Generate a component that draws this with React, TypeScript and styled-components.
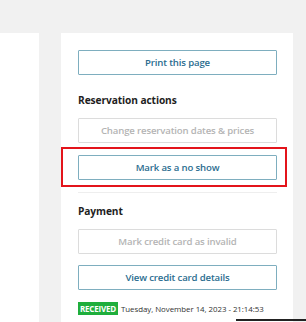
import React from 'react';
import styled, { createGlobalStyle } from 'styled-components';

const GlobalStyle = createGlobalStyle`
  html, body {
    margin: 0;
    padding: 0;
    background: #f1f1f1;
    font-family: "Open Sans", "Noto Sans", Arial, sans-serif;
    overflow: hidden;
  }
`;

const Page = styled.div`
  display: flex;
  gap: 22px;
  padding-top: 33px;
  height: 322px;
  box-sizing: border-box;
  position: relative;
`;

const SidePanel = styled.div`
  width: 39px;
  background: #fff;
`;

const Card = styled.div`
  width: 232px;
  background: #fff;
  padding: 17px 16px 0 17px;
  box-sizing: border-box;
  display: flex;
  flex-direction: column;
`;

const Button = styled.button<{ $disabled?: boolean }>`
  height: 25px;
  width: 100%;
  box-sizing: border-box;
  background: #fff;
  border: 1px solid ${(p) => (p.$disabled ? '#dcdcdc' : '#7eaebf')};
  border-radius: 1px;
  color: ${(p) => (p.$disabled ? '#b4b4b4' : '#2b6d8f')};
  font-family: "Open Sans", "Noto Sans", Arial, sans-serif;
  font-size: 9.6px;
  font-weight: 600;
  letter-spacing: -0.15px;
  padding: 0;
  cursor: ${(p) => (p.$disabled ? 'default' : 'pointer')};
  margin-top: ${(p) => (p.$disabled ? '10px' : '11px')};
`;

const Heading = styled.h3`
  margin: 17px 0 0;
  font-size: 10.2px;
  line-height: 16px;
  font-weight: 700;
  color: #1e1e1e;
  letter-spacing: -0.1px;
`;

const Highlight = styled.div`
  position: relative;
  margin-top: 11px;

  &::after {
    content: '';
    position: absolute;
    left: -17px;
    right: -10px;
    top: -7px;
    bottom: -7px;
    border: 2px solid #e3141b;
  }
`;

const Divider = styled.hr`
  border: none;
  border-top: 1px solid #eeeeee;
  margin: 12px 0 0;
`;

const Status = styled.div`
  display: flex;
  align-items: center;
  gap: 3px;
  margin-top: 12px;
`;

const Badge = styled.span`
  background: #1fae3c;
  color: #fff;
  font-size: 8px;
  font-weight: 700;
  line-height: 13px;
  padding: 0 2px;
  letter-spacing: -0.2px;
`;

const DateText = styled.span`
  font-size: 7.9px;
  color: #333;
  letter-spacing: -0.05px;
`;

const BottomBar = styled.div`
  position: absolute;
  left: 236px;
  right: 0;
  bottom: 1px;
  height: 2px;
  background: #222;
`;

export default function App() {
  return (
    <>
      <GlobalStyle />
      <Page>
        <SidePanel />
        <Card>
          <Button style={{ marginTop: 0 }}>Print this page</Button>
          <Heading>Reservation actions</Heading>
          <Button $disabled>Change reservation dates &amp; prices</Button>
          <Highlight>
            <Button style={{ marginTop: 0 }}>Mark as a no show</Button>
          </Highlight>
          <Divider />
          <Heading style={{ marginTop: 10 }}>Payment</Heading>
          <Button $disabled>Mark credit card as invalid</Button>
          <Button>View credit card details</Button>
          <Status>
            <Badge>RECEIVED</Badge>
            <DateText>Tuesday, November 14, 2023 - 21:14:53</DateText>
          </Status>
        </Card>
        <BottomBar />
      </Page>
    </>
  );
}
